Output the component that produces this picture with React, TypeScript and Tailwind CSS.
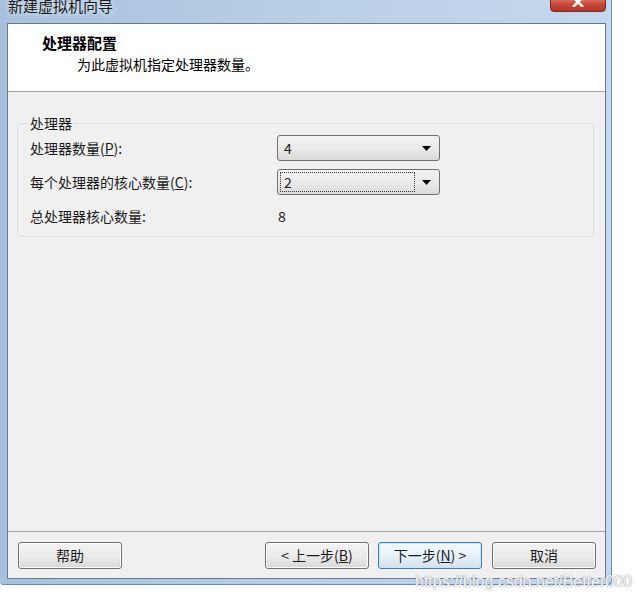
import React from "react";

const cjk = "font-['Microsoft_YaHei','Noto_Sans_CJK_SC',sans-serif]";

function Combo({ value, focused }: { value: string; focused?: boolean }) {
  return (
    <div className="w-[163px] h-[26px] rounded-[3px] border border-[#707070] bg-gradient-to-b from-[#f2f2f2] via-[#ebebeb] to-[#d9d9d9] flex items-center px-[2px] relative">
      <div
        className={
          "flex-1 h-[20px] flex items-center pl-[3px] text-[14px] leading-none " +
          (focused ? "border border-dotted border-[#333]" : "border border-transparent")
        }
      >
        {value}
      </div>
      <div className="w-[22px] flex justify-center">
        <svg width="9" height="5" viewBox="0 0 9 5">
          <path d="M0 0h9L4.5 5z" fill="#000" />
        </svg>
      </div>
    </div>
  );
}

function Btn({ children, primary }: { children: React.ReactNode; primary?: boolean }) {
  return (
    <div
      className={
        "w-[104px] h-[27px] rounded-[3px] border flex items-center justify-center text-[14px] text-[#1a1a1a] " +
        (primary
          ? "border-[#3c7fb1] bg-gradient-to-b from-[#f4fafd] via-[#e8f1f8] to-[#d3e2ee] shadow-[inset_0_0_0_1px_#c8e6f8]"
          : "border-[#707070] bg-gradient-to-b from-[#f3f3f3] via-[#ebebeb] to-[#d8d8d8] shadow-[inset_0_0_0_1px_#fcfcfc]")
      }
    >
      {children}
    </div>
  );
}

export default function App() {
  return (
    <div className={"relative w-[637px] h-[598px] bg-white overflow-hidden " + cjk}>
      {/* window frame */}
      <div className="relative w-[612px] h-[585px] bg-gradient-to-r from-[#a7c1dc] via-[#b9cfe6] to-[#c4d8ed] pt-[23px] pl-[7px] pr-[6px] pb-[6px] rounded-b-[4px] shadow-[inset_-1px_-1px_0_#5a8fc0]">
        {/* title */}
        <div className="absolute left-[8px] top-[-3px] text-[15px] leading-[18px] text-[#1b1b1b] [text-shadow:0_0_6px_#ffffff]">
          新建虚拟机向导
        </div>
        <div className="absolute left-[550px] top-[-4px] w-[56px] h-[16px] rounded-b-[4px] border border-[#7a2a22] bg-gradient-to-b from-[#e08a7c] via-[#c9483a] to-[#b73423] flex justify-center items-start">
          <svg width="14" height="10" viewBox="0 0 14 10">
            <path d="M2 0L7 5L12 0M2 10L7 5L12 10" stroke="#fff" strokeWidth="2.5" fill="none" />
          </svg>
        </div>

        {/* client */}
        <div className="h-full flex flex-col border border-[#6b7b8c] bg-[#f0f0f0]">
          <div className="h-[68px] bg-white border-b border-[#a0a0a0] flex flex-col">
            <div className="ml-[34px] mt-[10px] text-[15px] font-bold leading-[18px] text-black">处理器配置</div>
            <div className="ml-[69px] mt-[3px] text-[14px] leading-[18px] text-black">为此虚拟机指定处理器数量。</div>
          </div>

          <div className="flex-1 flex flex-col">
            <div className="relative mt-[31px] ml-[9px] mr-[11px] h-[114px] rounded-[3px] border border-[#d5dfe5] pt-[11px] pl-[12px] flex flex-col gap-[8px] text-[14px] text-[#1a1a1a]">
              <div className="absolute left-[11px] top-[-10px] bg-[#f0f0f0] px-[1px] leading-[18px]">处理器</div>
              <div className="flex items-center h-[26px]">
                <div className="w-[247px] leading-none">
                  处理器数量(<span className="underline">P</span>):
                </div>
                <Combo value="4" />
              </div>
              <div className="flex items-center h-[26px]">
                <div className="w-[247px] leading-none">
                  每个处理器的核心数量(<span className="underline">C</span>):
                </div>
                <Combo value="2" focused />
              </div>
              <div className="flex items-center h-[26px]">
                <div className="w-[247px] leading-none">总处理器核心数量:</div>
                <div className="pl-[1px] leading-none">8</div>
              </div>
            </div>

            <div className="flex-1" />

            <div className="h-[47px] border-t border-[#a0a0a0] pt-[10px] pl-[10px] pr-[9px] flex">
              <Btn>帮助</Btn>
              <div className="flex-1" />
              <div className="flex gap-[9px]">
                <Btn>
                  &lt; 上一步(<span className="underline">B</span>)
                </Btn>
                <Btn primary>
                  下一步(<span className="underline">N</span>) &gt;
                </Btn>
                <div className="ml-[1px]">
                  <Btn>取消</Btn>
                </div>
              </div>
            </div>
          </div>
        </div>
      </div>

      {/* watermark */}
      <div className="absolute left-[415px] top-[570px] text-[16px] font-['Liberation_Sans',sans-serif] text-white/90 [text-shadow:0_0_1px_#9a9a9a,0_0_1px_#9a9a9a]">
        https://blog.csdn.net/Better000
      </div>
    </div>
  );
}
